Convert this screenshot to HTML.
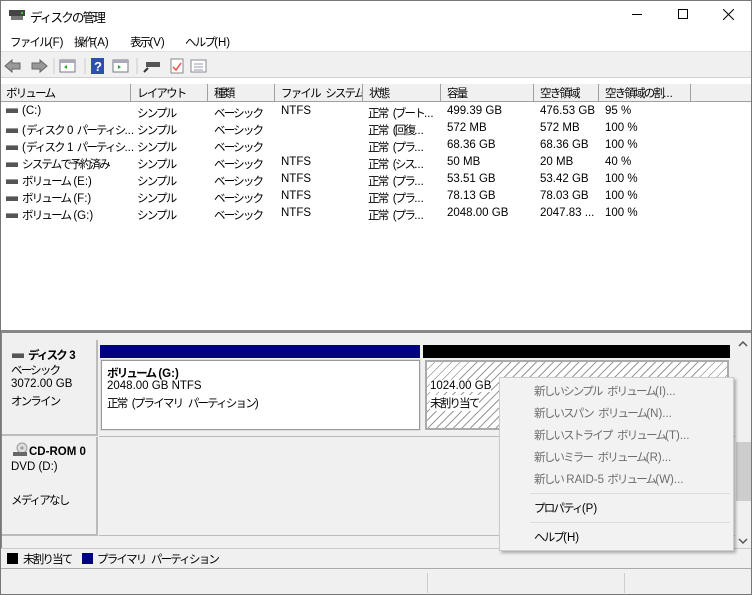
<!DOCTYPE html>
<html><head><meta charset="utf-8"><style>
*{margin:0;padding:0;box-sizing:border-box}
body{width:752px;height:595px;overflow:hidden;background:#f0f0f0;font-family:"Liberation Sans","Noto Sans CJK JP",sans-serif;font-size:11.5px;color:#000;position:relative}
.a{position:absolute;white-space:nowrap}
.j{letter-spacing:-1.8px;word-spacing:4px}
.hdr{position:absolute;top:84px;height:18px;border-right:1px solid #a0a0a0;border-bottom:1px solid #a0a0a0;background:#f0f0f0;padding:1px 0 0 6px;overflow:hidden;white-space:nowrap}
.row{position:absolute;left:0;width:752px;height:17px}
.row span.c{position:absolute;top:2px;white-space:nowrap}
.dk{display:inline-block;width:12px;height:5px;background:#555;border-top:1px solid #999;vertical-align:middle;margin-right:4px}
.mi{position:absolute;left:534px;color:#6d6d6d;white-space:nowrap}
</style></head><body>
<div class="a" style="left:0;top:0;width:752px;height:30px;background:#fff"></div>
<svg class="a" style="left:8px;top:8px" width="18" height="14"><rect x="1" y="2" width="16" height="6" fill="#444"/><rect x="3" y="8" width="12" height="4" fill="#777"/><rect x="13" y="4" width="2" height="2" fill="#3c3"/></svg>
<div class="a" style="left:30px;top:7px;font-size:12.5px"><span class="j">ディスクの管理</span></div>
<div class="a" style="left:632px;top:14px;width:10px;height:1px;background:#000"></div>
<div class="a" style="left:678px;top:9px;width:10px;height:10px;border:1px solid #000"></div>
<svg class="a" style="left:723px;top:9px" width="11" height="11"><path d="M0 0L11 11M11 0L0 11" stroke="#000"/></svg>
<div class="a" style="left:0;top:30px;width:752px;height:22px;background:#fff;border-bottom:1px solid #e0e0e0"></div>
<div class="a" style="left:10px;top:34px"><span class="j">ファイル</span>(F)</div>
<div class="a" style="left:74px;top:34px"><span class="j">操作</span>(A)</div>
<div class="a" style="left:130px;top:34px"><span class="j">表示</span>(V)</div>
<div class="a" style="left:185px;top:34px"><span class="j">ヘルプ</span>(H)</div>
<div class="a" style="left:0;top:77px;width:752px;height:1px;background:#d0d0d0"></div>
<svg class="a" style="left:4px;top:57px" width="210" height="18">
<path d="M1 9L8 3V6H16V12H8V15Z" fill="#999" stroke="#666"/>
<path d="M43 9L36 3V6H28V12H36V15Z" fill="#999" stroke="#666"/>
<line x1="50" y1="1" x2="50" y2="17" stroke="#ccc"/>
<rect x="56" y="3" width="15" height="12" fill="#fff" stroke="#778"/><rect x="56" y="3" width="15" height="3" fill="#aab"/><path d="M63 8L60 10L63 12Z" fill="#2a2"/>
<line x1="81" y1="1" x2="81" y2="17" stroke="#ccc"/>
<rect x="87" y="1" width="13" height="16" fill="#2c4fb0"/><text x="90" y="14" fill="#fff" font-size="13" font-weight="bold" font-family="Liberation Sans">?</text>
<rect x="109" y="3" width="15" height="12" fill="#fff" stroke="#778"/><rect x="109" y="3" width="15" height="3" fill="#aab"/><path d="M114 8L117 10L114 12Z" fill="#2a2"/>
<line x1="133" y1="1" x2="133" y2="17" stroke="#ccc"/>
<rect x="142" y="5" width="14" height="5" fill="#555"/><path d="M144 11L140 15" stroke="#333" stroke-width="2"/>
<rect x="167" y="2" width="12" height="14" fill="#fff" stroke="#888"/><path d="M169 10L172 13L177 6" stroke="#e44" stroke-width="1.5" fill="none"/>
<rect x="187" y="3" width="15" height="12" fill="#fff" stroke="#889"/><path d="M190 7H199M190 10H199M190 13H199" stroke="#99a"/>
</svg>
<div class="a" style="left:0;top:78px;width:752px;height:252px;background:#fff"></div>
<div class="hdr" style="left:0;width:131px"><span class="j">ボリューム</span></div>
<div class="hdr" style="left:131px;width:77px"><span class="j">レイアウト</span></div>
<div class="hdr" style="left:208px;width:67px"><span class="j">種類</span></div>
<div class="hdr" style="left:275px;width:88px"><span class="j">ファイル システム</span></div>
<div class="hdr" style="left:363px;width:78px"><span class="j">状態</span></div>
<div class="hdr" style="left:441px;width:93px"><span class="j">容量</span></div>
<div class="hdr" style="left:534px;width:65px"><span class="j">空き領域</span></div>
<div class="hdr" style="left:599px;width:92px"><span class="j">空き領域の割</span>...</div>
<div class="hdr" style="left:691px;width:61px;border-right:none"></div>
<div class="row" style="top:103px"><span class="c" style="left:6px"><i class="dk"></i>(C:)</span><span class="c j" style="left:137px">シンプル</span><span class="c j" style="left:214px">ベーシック</span><span class="c" style="left:281px">NTFS</span><span class="c" style="left:368px"><span class="j">正常 (ブート</span>...</span><span class="c" style="left:447px">499.39 GB</span><span class="c" style="left:540px">476.53 GB</span><span class="c" style="left:605px">95 %</span></div>
<div class="row" style="top:120px"><span class="c" style="left:6px"><i class="dk"></i>(<span class="j">ディスク</span> 0 <span class="j">パーティシ</span>...</span><span class="c j" style="left:137px">シンプル</span><span class="c j" style="left:214px">ベーシック</span><span class="c" style="left:368px"><span class="j">正常 (回復</span>...</span><span class="c" style="left:447px">572 MB</span><span class="c" style="left:540px">572 MB</span><span class="c" style="left:605px">100 %</span></div>
<div class="row" style="top:137px"><span class="c" style="left:6px"><i class="dk"></i>(<span class="j">ディスク</span> 1 <span class="j">パーティシ</span>...</span><span class="c j" style="left:137px">シンプル</span><span class="c j" style="left:214px">ベーシック</span><span class="c" style="left:368px"><span class="j">正常 (プラ</span>...</span><span class="c" style="left:447px">68.36 GB</span><span class="c" style="left:540px">68.36 GB</span><span class="c" style="left:605px">100 %</span></div>
<div class="row" style="top:154px"><span class="c" style="left:6px"><i class="dk"></i><span class="j">システムで予約済み</span></span><span class="c j" style="left:137px">シンプル</span><span class="c j" style="left:214px">ベーシック</span><span class="c" style="left:281px">NTFS</span><span class="c" style="left:368px"><span class="j">正常 (シス</span>...</span><span class="c" style="left:447px">50 MB</span><span class="c" style="left:540px">20 MB</span><span class="c" style="left:605px">40 %</span></div>
<div class="row" style="top:171px"><span class="c" style="left:6px"><i class="dk"></i><span class="j">ボリューム</span> (E:)</span><span class="c j" style="left:137px">シンプル</span><span class="c j" style="left:214px">ベーシック</span><span class="c" style="left:281px">NTFS</span><span class="c" style="left:368px"><span class="j">正常 (プラ</span>...</span><span class="c" style="left:447px">53.51 GB</span><span class="c" style="left:540px">53.42 GB</span><span class="c" style="left:605px">100 %</span></div>
<div class="row" style="top:188px"><span class="c" style="left:6px"><i class="dk"></i><span class="j">ボリューム</span> (F:)</span><span class="c j" style="left:137px">シンプル</span><span class="c j" style="left:214px">ベーシック</span><span class="c" style="left:281px">NTFS</span><span class="c" style="left:368px"><span class="j">正常 (プラ</span>...</span><span class="c" style="left:447px">78.13 GB</span><span class="c" style="left:540px">78.03 GB</span><span class="c" style="left:605px">100 %</span></div>
<div class="row" style="top:205px"><span class="c" style="left:6px"><i class="dk"></i><span class="j">ボリューム</span> (G:)</span><span class="c j" style="left:137px">シンプル</span><span class="c j" style="left:214px">ベーシック</span><span class="c" style="left:281px">NTFS</span><span class="c" style="left:368px"><span class="j">正常 (プラ</span>...</span><span class="c" style="left:447px">2048.00 GB</span><span class="c" style="left:540px">2047.83 ...</span><span class="c" style="left:605px">100 %</span></div>
<div class="a" style="left:0;top:330px;width:752px;height:3px;background:#888"></div>
<div class="a" style="left:0;top:333px;width:735px;height:215px;background:#f0f0f0;border-left:2px solid #888"></div>
<div class="a" style="left:2px;top:340px;width:96px;height:96px;border-right:2px solid #bbb;border-bottom:2px solid #bbb"></div>
<div class="a" style="left:12px;top:347px;font-weight:bold"><i class="dk"></i><span class="j">ディスク</span> 3</div>
<div class="a j" style="left:11px;top:362px">ベーシック</div>
<div class="a" style="left:11px;top:378px">3072.00 GB</div>
<div class="a j" style="left:11px;top:393px">オンライン</div>
<div class="a" style="left:99px;top:436px;width:636px;height:1px;background:#bbb"></div>
<div class="a" style="left:100px;top:345px;width:320px;height:13px;background:#000080"></div>
<div class="a" style="left:423px;top:345px;width:307px;height:13px;background:#000"></div>
<div class="a" style="left:101px;top:360px;width:319px;height:70px;background:#fff;border:1px solid #999;outline:1px solid #ddd"></div>
<div class="a" style="left:107px;top:365px;font-weight:bold"><span class="j">ボリューム</span> (G:)</div>
<div class="a" style="left:107px;top:380px">2048.00 GB NTFS</div>
<div class="a" style="left:107px;top:395px"><span class="j">正常 (プライマリ パーティション)</span></div>
<div class="a" style="left:425px;top:360px;width:304px;height:70px;border:2px solid #aaa;background:repeating-linear-gradient(135deg,#fff 0 5px,#999 5px 6px)"></div>
<div class="a" style="left:430px;top:380px;background:#fff">1024.00 GB</div>
<div class="a j" style="left:430px;top:395px;background:#fff">未割り当て</div>
<div class="a" style="left:2px;top:437px;width:96px;height:99px;border-right:2px solid #bbb;border-bottom:2px solid #bbb"></div>
<svg class="a" style="left:12px;top:442px" width="18" height="16"><circle cx="10" cy="6" r="5" fill="#ddd" stroke="#999"/><circle cx="10" cy="6" r="1.5" fill="#999"/><rect x="1" y="10" width="14" height="4" fill="#666"/></svg>
<div class="a" style="left:29px;top:446px;font-weight:bold">CD-ROM 0</div>
<div class="a" style="left:11px;top:461px">DVD (D:)</div>
<div class="a j" style="left:11px;top:492px">メディアなし</div>
<div class="a" style="left:99px;top:535px;width:636px;height:1px;background:#bbb"></div>
<div class="a" style="left:735px;top:337px;width:17px;height:211px;background:#f0f0f0"></div>
<svg class="a" style="left:738px;top:340px" width="10" height="8"><path d="M1 6L5 2L9 6" stroke="#555" fill="none" stroke-width="1.5"/></svg>
<div class="a" style="left:736px;top:442px;width:15px;height:59px;background:#cdcdcd"></div>
<svg class="a" style="left:738px;top:537px" width="10" height="8"><path d="M1 2L5 6L9 2" stroke="#555" fill="none" stroke-width="1.5"/></svg>
<div class="a" style="left:0;top:548px;width:752px;height:1px;background:#ccc"></div>
<div class="a" style="left:7px;top:553px;width:11px;height:11px;background:#000"></div>
<div class="a j" style="left:23px;top:551px">未割り当て</div>
<div class="a" style="left:82px;top:553px;width:11px;height:11px;background:#000080"></div>
<div class="a j" style="left:97px;top:551px">プライマリ パーティション</div>
<div class="a" style="left:0;top:568px;width:752px;height:1px;background:#aaa"></div>
<div class="a" style="left:427px;top:573px;width:1px;height:20px;background:#ccc"></div>
<div class="a" style="left:624px;top:573px;width:1px;height:20px;background:#ccc"></div>
<div class="a" style="left:0;top:0;width:752px;height:595px;border:1px solid #777;pointer-events:none"></div>
<div class="a" style="left:499px;top:377px;width:235px;height:174px;background:#f2f2f2;border:1px solid #ccc;box-shadow:2px 2px 3px rgba(0,0,0,.3)"></div>
<div class="mi" style="top:383px"><span class="j">新しいシンプル ボリューム</span>(I)...</div>
<div class="mi" style="top:405px"><span class="j">新しいスパン ボリューム</span>(N)...</div>
<div class="mi" style="top:427px"><span class="j">新しいストライプ ボリューム</span>(T)...</div>
<div class="mi" style="top:449px"><span class="j">新しいミラー ボリューム</span>(R)...</div>
<div class="mi" style="top:471px"><span class="j">新しい</span> RAID-5 <span class="j">ボリューム</span>(W)...</div>
<div class="a" style="left:530px;top:493px;width:200px;height:1px;background:#ddd"></div>
<div class="mi" style="top:500px;color:#000"><span class="j">プロパティ</span>(P)</div>
<div class="a" style="left:530px;top:522px;width:200px;height:1px;background:#ddd"></div>
<div class="mi" style="top:529px;color:#000"><span class="j">ヘルプ</span>(H)</div>
</body></html>
